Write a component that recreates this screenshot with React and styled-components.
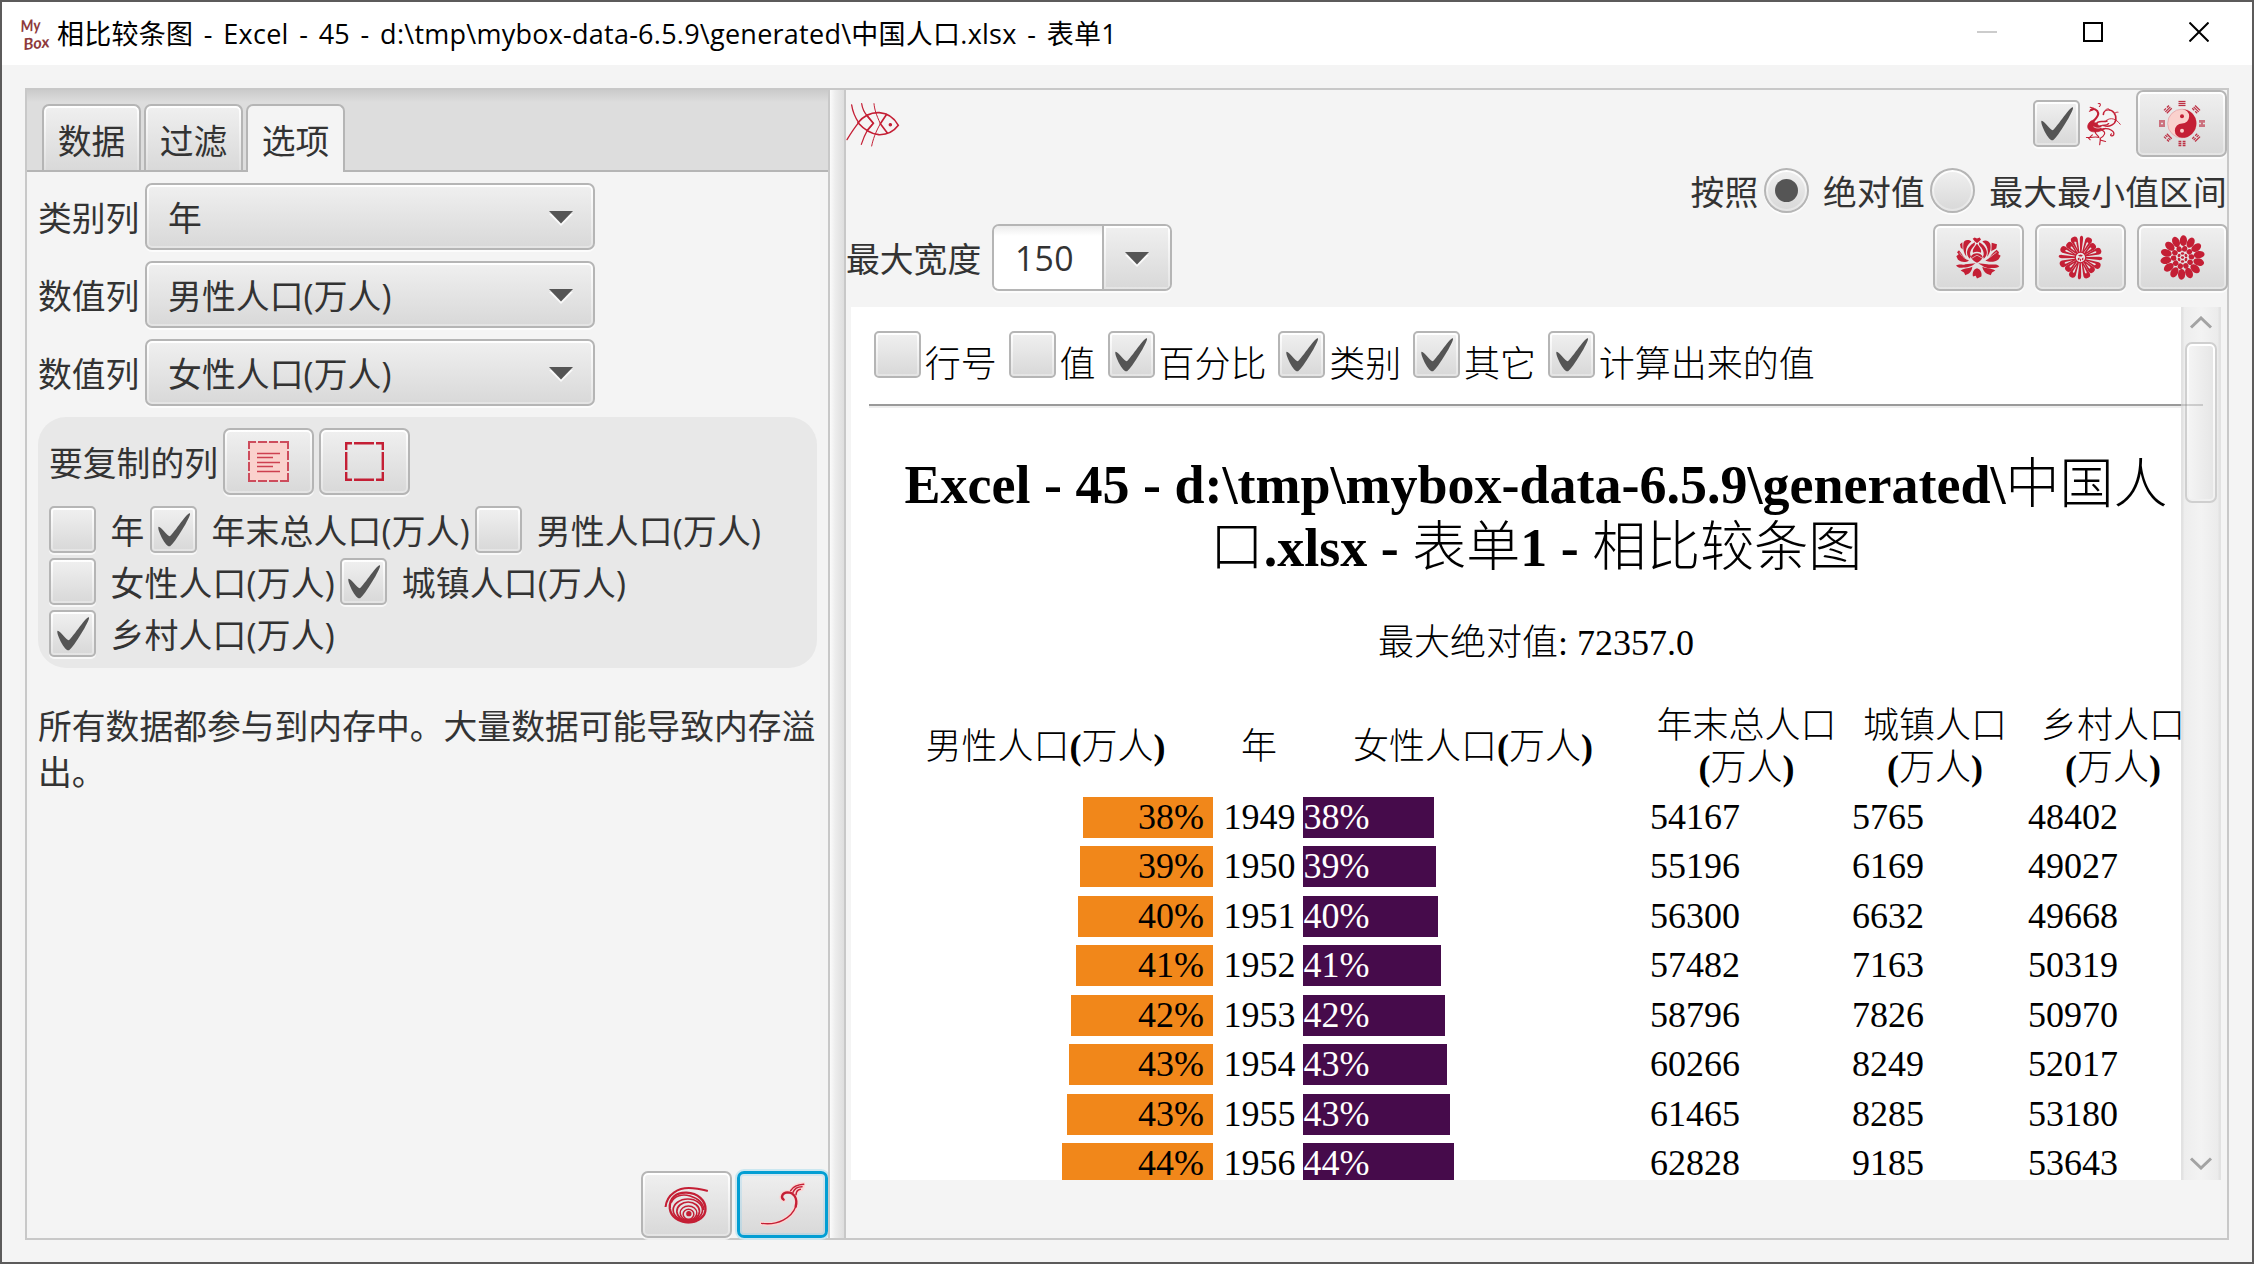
import React from "react";
import styled, { createGlobalStyle, css } from "styled-components";

const RED = "#c41f35";
const PINK = "#fad1cd";
const SANS = '"Open Sans", "Noto Sans CJK SC", sans-serif';
const SERIF = '"Liberation Serif", "Noto Sans CJK SC", serif';

const GlobalStyle = createGlobalStyle`
  *, *::before, *::after { box-sizing: border-box; }
  body { margin: 0; background: #5c5b5b; overflow: hidden; }
  svg { display: block; flex: none; }
`;

const Window = styled.div`
  width: 2254px;
  height: 1264px;
  border: 2px solid #5c5b5b;
  background: #f4f4f4;
  display: flex;
  flex-direction: column;
  font-family: ${SANS};
  font-size: 33.8px;
  line-height: 46px;
  color: #333;
  white-space: nowrap;
`;

const TitleBar = styled.header`
  height: 63px;
  flex: none;
  background: #fff;
  display: flex;
  align-items: center;
  padding: 0 43px 0 16px;
`;

const Title = styled.h1`
  margin: 0 auto 0 4px;
  font-size: 27px;
  line-height: 40px;
  font-weight: 400;
  letter-spacing: 0.25px;
  word-spacing: 3.3px;
  color: #000;
`;

const WindowButtons = styled.div`
  display: flex;
  gap: 86px;
  padding-bottom: 3px;
`;

const Split = styled.main`
  flex: 1;
  margin: 23px 23px 22px;
  border: 2px solid #c8c8c8;
  display: flex;
  min-height: 0;
`;

const LeftPane = styled.section`
  width: 801px;
  flex: none;
  display: flex;
  flex-direction: column;
`;

const Splitter = styled.div`
  width: 18px;
  flex: none;
  border: solid #c8c8c8;
  border-width: 0 2px;
  background: linear-gradient(90deg, #fbfbfb, #ececec 40%, #dedede);
`;

const RightPane = styled.section`
  flex: 1;
  min-width: 0;
  display: flex;
  flex-direction: column;
`;

const TabHeader = styled.nav`
  height: 82px;
  flex: none;
  display: flex;
  align-items: flex-end;
  gap: 3px;
  padding: 0 14px 0 15px;
  border-bottom: 2px solid #b5b5b5;
  background: linear-gradient(#cbcbcb, #dddddd 12px);
`;

const Tab = styled.div`
  width: 99px;
  height: 66px;
  border: 2px solid #b5b5b5;
  border-bottom: 0;
  border-radius: 7px 7px 0 0;
  padding: 2px 2px 0;
  display: flex;
  align-items: center;
  justify-content: center;
  background: linear-gradient(#efefef, #d9d9d9) content-box,
    linear-gradient(#fff, #e0e0e0) padding-box;
  ${(p) =>
    p.$active &&
    css`
      height: 68px;
      margin-bottom: -2px;
      padding-bottom: 2px;
      background: #f4f4f4;
    `}
`;

const TabText = styled.span`
  height: 100%;
  display: flex;
  align-items: center;
  padding-top: 3px;
`;

const face = css`
  border: 2px solid #b5b5b5;
  padding: 2px;
  background: linear-gradient(#efefef, #d9d9d9) content-box,
    linear-gradient(#fff, #e4e4e4) padding-box;
  box-shadow: 0 2px 0 rgba(255, 255, 255, 0.7);
`;

const Form = styled.div`
  flex: 1;
  display: flex;
  flex-direction: column;
  padding: 11px 11px 0;
`;

const Field = styled.div`
  display: flex;
  align-items: center;
  gap: 5px;
  margin-bottom: 11px;
`;

const FieldLabel = styled.span`
  width: ${(p) => p.$width || "102px"};
  flex: none;
  padding-top: 2px;
`;

const Combo = styled.div`
  ${face}
  width: 450px;
  height: 67px;
  border-radius: 7px;
  display: flex;
  align-items: center;
  justify-content: space-between;
`;

const ComboText = styled.span`
  padding: 2px 0 0 19px;
  letter-spacing: 0.1px;
`;

const ComboArrow = styled.span`
  margin-right: 18px;
  padding-top: 3px;
`;

const Group = styled.div`
  width: 779px;
  height: 251px;
  border-radius: 28px;
  background: #e8e8e8;
  padding: 11px;
`;

const GroupHead = styled.div`
  display: flex;
  align-items: center;
  gap: 5px;
  margin-bottom: 11px;
`;

const IconButton = styled.button`
  ${face}
  width: 91px;
  height: 67px;
  flex: none;
  border-radius: 7px;
  display: flex;
  align-items: center;
  justify-content: center;
  ${(p) =>
    p.$focused &&
    css`
      border-width: 3px;
      border-color: #039ed3;
      background: linear-gradient(#eeeeee, #d9d9d9) content-box,
        linear-gradient(#d4e6ef, #bdd5df) padding-box;
      box-shadow: 0 0 0 2px #cbe7f0;
    `}
`;

const CheckRow = styled.div`
  display: flex;
  gap: 5.5px;
  height: 52px;
`;

const CheckItem = styled.label`
  display: flex;
  gap: 14.5px;
  height: 47px;
  line-height: 50px;
  letter-spacing: 0.2px;
`;

const Box = styled.span`
  ${face}
  width: 47px;
  height: 47px;
  flex: none;
  border-radius: 5px;
  display: flex;
  align-items: center;
  justify-content: center;
`;

const Note = styled.p`
  margin: 36px 0 0;
  width: 781px;
  line-height: 45.5px;
  white-space: normal;
`;

const Actions = styled.div`
  display: flex;
  justify-content: flex-end;
  gap: 5px;
`;

const TopRow = styled.div`
  height: 67px;
  flex: none;
  display: flex;
  align-items: center;
`;

const FishSlot = styled.span`
  padding-top: 2px;
`;

const TopTools = styled.div`
  margin-left: auto;
  display: flex;
  align-items: center;
`;

const BirdSlot = styled.span`
  margin: 0 15px 0 5px;
`;

const ModeRow = styled.div`
  height: 45px;
  flex: none;
  margin: 11px 0;
  display: flex;
  align-items: center;
  justify-content: flex-end;
`;

const ModeText = styled.span`
  padding-top: 2px;
  letter-spacing: 0.15px;
  margin-left: ${(p) => p.$left || "0"};
`;

const Radio = styled.span`
  ${face}
  width: 45px;
  height: 45px;
  margin-left: 5px;
  border-radius: 50%;
  display: flex;
  align-items: center;
  justify-content: center;
`;

const RadioDot = styled.span`
  width: 23px;
  height: 23px;
  border-radius: 50%;
  background: #555;
`;

const WidthRow = styled.div`
  height: 67px;
  flex: none;
  display: flex;
  align-items: center;
`;

const EditableCombo = styled.div`
  width: 180px;
  height: 67px;
  margin-left: 11px;
  border: 2px solid #b5b5b5;
  border-radius: 7px;
  box-shadow: 0 2px 0 rgba(255, 255, 255, 0.7);
  display: flex;
  overflow: hidden;
`;

const ComboInput = styled.span`
  flex: 1;
  padding: 9px 0 0 21px;
  letter-spacing: 0.3px;
  background: linear-gradient(#ececec, #fff 10px);
`;

const ComboToggle = styled.span`
  width: 68px;
  border-left: 2px solid #b5b5b5;
  padding: 2px;
  display: flex;
  align-items: center;
  justify-content: center;
  background: linear-gradient(#efefef, #d9d9d9) content-box,
    linear-gradient(#fff, #e4e4e4) padding-box;
`;

const ToggleArrow = styled.span`
  padding-top: 3px;
`;

const FlowerButtons = styled.div`
  margin: 0 -1px 0 auto;
  display: flex;
  gap: 11px;
`;

const WebView = styled.div`
  position: relative;
  width: 1370px;
  height: 873px;
  margin: 16px 0 0 5px;
  background: #fff;
  color: #000;
  overflow: hidden;
  font-family: ${SERIF};
  font-size: 36px;
`;

const Page = styled.article`
  padding: 24px 18px 0;
`;

const Switches = styled.div`
  display: flex;
  gap: 12px;
  padding-left: 5px;
  height: 73px;
`;

const Switch = styled.label`
  display: flex;
  gap: 3.8px;
  line-height: 69px;
  font-weight: 300;
`;

const Rule = styled.hr`
  margin: 0;
  height: 4px;
  border: 0;
  border-top: 2px solid #9a9a9a;
  background: #eeeeee;
`;

const Heading = styled.h2`
  margin: 46px 0 0;
  font-size: 54px;
  line-height: 62.5px;
  font-weight: 700;
  text-align: center;
`;

const Han = styled.span`
  font-weight: 300;
`;

const Summary = styled.p`
  margin: 43px 0 0;
  line-height: 42px;
  text-align: center;
  font-weight: 400;
`;

const Table = styled.div`
  margin: 41px 0 0 9px;
`;

const Row = styled.div`
  display: grid;
  grid-template-columns: 345px 80px 347px 202px 176px 170px;
  height: 49.5px;
  line-height: 41px;
`;

const HeadRow = styled(Row)`
  height: 84px;
  line-height: 42px;
  font-weight: 700;
  align-items: center;
  text-align: center;
  margin-bottom: 7.5px;
`;

const HeadCell = styled.div`
  padding-right: ${(p) => p.$pad}px;
`;

const LeftBar = styled.div`
  width: ${(p) => p.$size}px;
  height: 41px;
  margin-left: ${(p) => 335 - p.$size}px;
  padding-right: 9px;
  background: #f1871a;
  text-align: right;
`;

const RightBar = styled.div`
  width: ${(p) => p.$size}px;
  height: 41px;
  padding-left: 0.5px;
  background: #460b4b;
  color: #fff;
`;

const YearCell = styled.div`
  padding-left: 0.5px;
`;

const ScrollBar = styled.div`
  position: absolute;
  top: 0;
  right: 0;
  width: 40px;
  height: 100%;
  padding: 9px 4px 10px;
  display: flex;
  flex-direction: column;
  align-items: center;
  background: linear-gradient(90deg, #e2e2e2 0 2px, #ededed 3px, #f3f3f3 50%, #ebebeb 37px, #e2e2e2 38px);
`;

const Thumb = styled.div`
  width: 32px;
  height: 161px;
  margin: 13px 0 auto;
  padding: 2px;
  border: 2px solid #cfcfcf;
  border-radius: 7px;
  background: linear-gradient(90deg, #f4f4f4, #e6e6e6) content-box,
    linear-gradient(#fff, #f0f0f0) padding-box;
`;

const RuleShade = styled.div`
  position: absolute;
  top: 97px;
  right: 18px;
  width: 22px;
  height: 2px;
  background: rgba(120, 120, 120, 0.3);
`;

function Tick() {
  return (
    <svg width="32" height="34" viewBox="-0.5 -1.1 16.5 17.6" preserveAspectRatio="none">
      <path
        d="M-0.25 6.083c0.843-0.758 4.583 4.833 5.75 4.833S14.5-1.5 15.917-0.917c1.292 0.532-8.75 17.083-10.5 17.083C3 16.167-1.094 6.833-0.25 6.083z"
        fill="#555"
      />
    </svg>
  );
}

function CheckBox({ on }) {
  return <Box>{on && <Tick />}</Box>;
}

function Arrow() {
  return (
    <svg width="24" height="15" viewBox="0 0 24 15">
      <path d="M0 3H24L12 15Z" fill="#fafafa" />
      <path d="M0 0H24L12 12.5Z" fill="#555" />
    </svg>
  );
}

function Chevron({ down }) {
  return (
    <svg width="24" height="13" viewBox="0 0 24 13">
      <path
        d={down ? "M2 1.5L12 11L22 1.5" : "M2 11.5L12 2L22 11.5"}
        fill="none"
        stroke="#a3a3a3"
        strokeWidth="3"
      />
    </svg>
  );
}

function Logo() {
  return (
    <svg width="35" height="34" viewBox="0 0 35 34" fill="#8e3a3c" fontFamily="Lato, sans-serif" fontStyle="italic" fontWeight="700">
      <text x="3" y="15" fontSize="16" textLength="20" lengthAdjust="spacingAndGlyphs" transform="rotate(-5 3 15)">My</text>
      <text x="6" y="33" fontSize="16" textLength="26" lengthAdjust="spacingAndGlyphs" transform="rotate(-6 6 33)">Box</text>
    </svg>
  );
}

function SelectAllIcon() {
  return (
    <svg width="41" height="41" viewBox="0 0 41 41">
      <rect x="0.5" y="0.5" width="40" height="40" fill={PINK} />
      <path d="M0 1H8M10 1H19M21 1H30M32 1H41M0 40H8M10 40H19M21 40H30M32 40H41M1 0V8M1 10V19M1 21V30M1 32V41M40 0V8M40 10V19M40 21V30M40 32V41" stroke="#cd4c5c" strokeWidth="2" />
      <path d="M9 12.5H32M9 21.5H32M9 30.5H32M9 16.5H25M9 25.5H25" stroke="#cd4050" strokeWidth="1.6" />
    </svg>
  );
}

function SelectNoneIcon() {
  return (
    <svg width="39" height="39" viewBox="0 0 39 39">
      <path d="M0 1.2H7M9 1.2H29M31 1.2H39M0 37.8H7M9 37.8H29M31 37.8H39M1.2 0V8M1.2 10V28M1.2 30V39M37.8 0V8M37.8 10V28M37.8 30V39" stroke={RED} strokeWidth="2.4" />
    </svg>
  );
}

function ShellIcon() {
  return (
    <svg width="45" height="38" viewBox="136 140 134 114" fill="none" stroke={RED}>
      <path d="M140 203C144 166 178 142 222 147C240 149 254 151 267 155" strokeWidth="6" />
      <path d="M140 203C143 185 150 172 160 164" strokeWidth="3" />
      <path d="M153 208C150 176 172 159 203 160C238 161 260 184 260 209C260 232 240 247 208 248C178 248 156 232 153 208Z" strokeWidth="7" />
      <path d="M157 190C166 168 192 163 214 170C240 178 254 194 255 212" strokeWidth="5" />
      <ellipse cx="207" cy="212" rx="44" ry="33" strokeWidth="5" />
      <ellipse cx="208" cy="216" rx="34" ry="28" strokeWidth="5" />
      <ellipse cx="209" cy="221" rx="25" ry="21" strokeWidth="4.5" />
      <ellipse cx="209" cy="225" rx="16" ry="15" strokeWidth="4.5" />
      <circle cx="210" cy="223" r="5" fill={RED} strokeWidth="6" />
      <path d="M178 236C190 247 230 247 242 236L232 247C218 251 198 251 188 246Z" fill={RED} strokeWidth="4" />
    </svg>
  );
}

function SproutIcon() {
  const glow =
    "M420 248C470 258 512 232 525 196C531 172 518 153 499 154C482 155 475 172 488 179M509 152C520 134 532 130 550 131M516 156C520 144 532 138 545 138M523 162C526 150 532 145 542 145";
  return (
    <svg width="45" height="45" viewBox="417 124 135 135" fill="none" strokeLinecap="round">
      <path d={glow} stroke="#fbd5d3" strokeWidth="12" />
      <path d="M422 248C470 255 512 232 525 196" stroke={RED} strokeWidth="4" />
      <path d="M524 198C531 172 518 155 499 155C484 156 478 170 488 177" stroke={RED} strokeWidth="7" />
      <path d="M509 150C518 135 530 132 548 131M516 155C520 144 532 138 543 138M525 162C526 152 532 147 538 146" stroke={RED} strokeWidth="4.5" />
    </svg>
  );
}

function FishIcon() {
  return (
    <svg width="54" height="44" viewBox="50 71 162 132" fill="none" stroke={RED} strokeWidth="3.6" strokeLinecap="round">
      <path d="M86 130C108 104 132 99 150 100C178 102 196 118 207 138C192 158 172 167 148 166C122 163 104 150 86 130Z" strokeWidth="4.8" />
      <path d="M67 77C70 98 76 112 88 130C74 147 64 163 53 181" strokeWidth="4" />
      <path d="M97 73C99 88 105 100 114 110L132 132L114 153C107 165 101 180 96 195" />
      <path d="M134 73C136 92 140 104 153 133C138 160 131 180 127 200" strokeWidth="3" />
      <path d="M114 110L132 132L114 153M172 105L153 133L174 161" strokeWidth="5" />
      <circle cx="183" cy="136" r="3.5" fill={RED} />
    </svg>
  );
}

function BirdIcon() {
  return (
    <svg width="36" height="44" viewBox="1108 304 98 134" preserveAspectRatio="none" fill="none" stroke={RED} strokeWidth="4" strokeLinecap="round" strokeLinejoin="round">
      <path d="M1124 328C1130 322 1142 326 1144 338C1145 350 1134 358 1126 368" strokeWidth="6" />
      <path d="M1144 309C1150 306 1152 314 1147 318M1132 323L1122 320M1130 328L1120 332" strokeWidth="3" />
      <path d="M1124 362C1112 372 1112 388 1126 394C1140 398 1154 392 1164 384C1154 388 1148 384 1152 376C1146 378 1140 374 1142 366C1136 370 1132 366 1132 360Z" fill={RED} strokeWidth="2" />
      <path d="M1142 366C1152 360 1158 366 1168 362M1150 378C1160 372 1166 378 1172 370" strokeWidth="4.5" />
      <path d="M1132 380C1142 386 1150 384 1156 378" stroke="#f4f4f4" strokeWidth="2" />
      <path d="M1160 376C1174 382 1190 372 1192 358C1194 342 1184 328 1172 328C1164 328 1158 334 1158 342" strokeWidth="4.5" />
      <path d="M1166 360C1178 350 1192 354 1204 372M1188 340C1190 336 1194 334 1198 335M1176 330C1174 322 1168 324 1164 328" strokeWidth="2.6" />
      <path d="M1158 386C1172 382 1190 392 1186 404C1182 410 1174 406 1180 401" strokeWidth="3.6" />
      <path d="M1136 394C1134 402 1144 404 1146 412C1134 408 1128 414 1112 412M1116 412L1122 419M1122 410L1128 404" strokeWidth="3.2" />
      <path d="M1154 390C1168 396 1160 408 1150 414C1146 420 1154 422 1164 424M1150 416L1148 434" strokeWidth="3.2" />
    </svg>
  );
}

function BaguaIcon() {
  const trigrams = [
    [1, 1, 1],
    [0, 1, 1],
    [0, 1, 0],
    [0, 0, 1],
    [0, 0, 0],
    [1, 0, 0],
    [1, 0, 1],
    [1, 1, 0],
  ];
  return (
    <svg width="46" height="47" viewBox="-69 -70 138 140">
      <circle r="43" fill={PINK} stroke="#e09aa0" strokeWidth="2" />
      <path d="M0 -43A43 43 0 0 1 0 43A21.5 21.5 0 0 1 0 0A21.5 21.5 0 0 0 0 -43Z" fill={RED} />
      <circle cy="-21.5" r="6" fill={RED} />
      <circle cy="21.5" r="6" fill={PINK} />
      {trigrams.map((lines, i) => (
        <g key={i} transform={`rotate(${i * 45})`}>
          {lines.map((solid, k) => (
            <path
              key={k}
              d={solid ? `M-10.5 ${-54 - k * 6}H10.5` : `M-10.5 ${-54 - k * 6}H-2M2 ${-54 - k * 6}H10.5`}
              stroke="#bd3044"
              strokeWidth="3.8"
            />
          ))}
        </g>
      ))}
    </svg>
  );
}

function PeonyIcon() {
  return (
    <svg width="45" height="42" viewBox="168 83 135 125" fill={RED}>
      <path d="M231 131C220 131 213 137 213 144C218 153 226 157 231 160C237 157 245 152 248 144C247 137 241 131 231 131Z" />
      <path d="M210 148C194 134 200 112 224 98C226 104 224 108 218 114C210 124 208 134 213 141C211 143 210 145 210 148Z" />
      <path d="M251 148C268 134 262 112 238 98C235 104 238 108 244 114C251 124 253 134 249 141C250 143 251 145 251 148Z" />
      <path d="M219 130C216 120 224 114 229 104L233 104C238 114 246 120 243 130C236 126 226 126 219 130Z" />
      <path d="M218 88L224 84L231 87L239 84L243 90L238 95L231 101L224 95Z" />
      <path d="M247 96C256 89 268 95 271 104C273 116 272 130 261 142C267 124 262 106 247 96Z" />
      <path d="M214 96C204 88 190 92 190 104C189 116 190 130 200 142C194 124 199 108 214 96Z" />
      <path d="M275 100L291 104L289 116C283 121 278 121 274 126ZM187 98L180 104L182 114L188 120Z" />
      <path d="M256 153C268 149 274 132 290 121L297 128L295 134L302 139L296 149C284 159 268 159 256 153Z" />
      <path d="M207 153C194 149 188 136 177 122L171 128L176 134L169 140L174 151C186 160 198 159 207 153Z" />
      <path d="M260 149C274 142 280 134 290 128M202 150C190 145 186 137 178 130" stroke="#e4e4e4" strokeWidth="2.2" fill="none" />
      <path d="M168 168C180 162 188 168 196 164L227 161C216 168 208 174 190 174C182 176 174 176 168 168Z" />
      <path d="M235 161L262 164C274 168 288 160 298 170C290 178 280 174 270 176C256 176 246 168 235 161Z" />
      <path d="M182 183C196 175 208 177 217 172C216 185 208 194 196 197L192 189Z" />
      <path d="M286 183C270 175 256 178 247 172C249 185 258 194 272 197L276 189Z" />
      <path d="M231 176C221 178 216 190 219 201L227 199L231 207L236 205L244 201C247 190 241 178 231 176Z" />
      <path d="M216 146L231 137L247 146" stroke="#e8e8e8" strokeWidth="2" fill="none" />
    </svg>
  );
}

function DaisyIcon() {
  const petals = 16;
  return (
    <svg width="45" height="45" viewBox="-68 -68 136 136">
      {Array.from({ length: petals }, (_, i) => {
        const thin = i % 4 === 0;
        const reach = i % 4 === 2 ? 59 : 66;
        const half = thin ? 5 : 10.5;
        return (
          <g key={i} transform={`rotate(${(i * 360) / petals + 3})`}>
            <path
              d={`M-2 -14L${-half} ${-reach + 10}Q${-half} ${-reach} 0 ${-reach}Q${half} ${-reach} ${half} ${-reach + 10}L2 -14Z`}
              fill={RED}
            />
            {!thin && <path d={`M0 -24L-2.8 ${-reach + 18}Q0 ${-reach + 12} 2.8 ${-reach + 18}Z`} fill="#e6e6e6" />}
          </g>
        );
      })}
      <circle r="16" fill="#e6e6e6" stroke={RED} strokeWidth="4" />
      <path d="M-8 -6L0 -9L7 -7L4 -3H-2ZM-8 2L-3 0V6L-8 9ZM5 2L9 0L8 9L4 6ZM-2 6L0 3L2 6L1 11H-1Z" fill={RED} />
    </svg>
  );
}

function DahliaIcon() {
  const ring = (count, radius, rx, ry, shift) =>
    Array.from({ length: count }, (_, i) => (
      <ellipse
        key={`${radius}-${i}`}
        cx="0"
        cy={-radius}
        rx={rx}
        ry={ry}
        transform={`rotate(${(i * 360) / count + shift})`}
      />
    ));
  return (
    <svg width="45" height="45" viewBox="-68 -68 136 136" fill={RED}>
      {ring(14, 51, 11, 16.5, 3)}
      {ring(10, 27, 8, 8.5, 14)}
      {ring(6, 12, 5, 4, 0)}
      <path d="M-5 0C-4 -6 4 -5 5 0C4 5 -3 5 -5 0Z" />
    </svg>
  );
}

const CHOICES = [
  [["年", false], ["年末总人口(万人)", true], ["男性人口(万人)", false]],
  [["女性人口(万人)", false], ["城镇人口(万人)", true]],
  [["乡村人口(万人)", true]],
];

const SWITCHES = [
  ["行号", false],
  ["值", false],
  ["百分比", true],
  ["类别", true],
  ["其它", true],
  ["计算出来的值", true],
];

const ROWS = [
  { year: 1949, pct: 38, bar: 130.5, total: 54167, urban: 5765, rural: 48402 },
  { year: 1950, pct: 39, bar: 133, total: 55196, urban: 6169, rural: 49027 },
  { year: 1951, pct: 40, bar: 135, total: 56300, urban: 6632, rural: 49668 },
  { year: 1952, pct: 41, bar: 137.5, total: 57482, urban: 7163, rural: 50319 },
  { year: 1953, pct: 42, bar: 142, total: 58796, urban: 7826, rural: 50970 },
  { year: 1954, pct: 43, bar: 144, total: 60266, urban: 8249, rural: 52017 },
  { year: 1955, pct: 43, bar: 146.5, total: 61465, urban: 8285, rural: 53180 },
  { year: 1956, pct: 44, bar: 151, total: 62828, urban: 9185, rural: 53643 },
];

function ComboField({ label, value }) {
  return (
    <Field>
      <FieldLabel>{label}</FieldLabel>
      <Combo>
        <ComboText>{value}</ComboText>
        <ComboArrow>
          <Arrow />
        </ComboArrow>
      </Combo>
    </Field>
  );
}

function OptionsPane() {
  return (
    <LeftPane>
      <TabHeader>
        <Tab><TabText>数据</TabText></Tab>
        <Tab><TabText>过滤</TabText></Tab>
        <Tab $active><TabText>选项</TabText></Tab>
      </TabHeader>
      <Form>
        <ComboField label="类别列" value="年" />
        <ComboField label="数值列" value="男性人口(万人)" />
        <ComboField label="数值列" value="女性人口(万人)" />
        <Group>
          <GroupHead>
            <FieldLabel $width="169px">要复制的列</FieldLabel>
            <IconButton><SelectAllIcon /></IconButton>
            <IconButton><SelectNoneIcon /></IconButton>
          </GroupHead>
          {CHOICES.map((row, i) => (
            <CheckRow key={i}>
              {row.map(([text, on]) => (
                <CheckItem key={text}>
                  <CheckBox on={on} />
                  {text}
                </CheckItem>
              ))}
            </CheckRow>
          ))}
        </Group>
        <Note>所有数据都参与到内存中。大量数据可能导致内存溢出。</Note>
      </Form>
      <Actions>
        <IconButton><ShellIcon /></IconButton>
        <IconButton $focused><SproutIcon /></IconButton>
      </Actions>
    </LeftPane>
  );
}

function Report() {
  return (
    <WebView>
      <Page>
        <Switches>
          {SWITCHES.map(([text, on]) => (
            <Switch key={text}>
              <CheckBox on={on} />
              {text}
            </Switch>
          ))}
        </Switches>
        <Rule />
        <Heading>
          Excel - 45 - d:\tmp\mybox-data-6.5.9\generated\<Han>中国人</Han>
          <br />
          <Han>口</Han>.xlsx - <Han>表单</Han>1 - <Han>相比较条图</Han>
        </Heading>
        <Summary>
          <Han>最大绝对值</Han>: 72357.0
        </Summary>
        <Table>
          <HeadRow>
            <HeadCell $pad={10}><Han>男性人口</Han>(<Han>万人</Han>)</HeadCell>
            <HeadCell $pad={8}><Han>年</Han></HeadCell>
            <HeadCell $pad={7}><Han>女性人口</Han>(<Han>万人</Han>)</HeadCell>
            <HeadCell $pad={9}><Han>年末总人口</Han><br />(<Han>万人</Han>)</HeadCell>
            <HeadCell $pad={10}><Han>城镇人口</Han><br />(<Han>万人</Han>)</HeadCell>
            <HeadCell $pad={0}><Han>乡村人口</Han><br />(<Han>万人</Han>)</HeadCell>
          </HeadRow>
          {ROWS.map((r) => (
            <Row key={r.year}>
              <div><LeftBar $size={r.bar}>{r.pct}%</LeftBar></div>
              <YearCell>{r.year}</YearCell>
              <div><RightBar $size={r.bar}>{r.pct}%</RightBar></div>
              <div>{r.total}</div>
              <div>{r.urban}</div>
              <div>{r.rural}</div>
            </Row>
          ))}
        </Table>
      </Page>
      <ScrollBar>
        <Chevron />
        <Thumb />
        <Chevron down />
      </ScrollBar>
      <RuleShade />
    </WebView>
  );
}

function ChartPane() {
  return (
    <RightPane>
      <TopRow>
        <FishSlot><FishIcon /></FishSlot>
        <TopTools>
          <CheckBox on />
          <BirdSlot><BirdIcon /></BirdSlot>
          <IconButton><BaguaIcon /></IconButton>
        </TopTools>
      </TopRow>
      <ModeRow>
        <ModeText>按照</ModeText>
        <Radio><RadioDot /></Radio>
        <ModeText $left="14.5px">绝对值</ModeText>
        <Radio />
        <ModeText $left="14.5px">最大最小值区间</ModeText>
      </ModeRow>
      <WidthRow>
        <FieldLabel $width="135px">最大宽度</FieldLabel>
        <EditableCombo>
          <ComboInput>150</ComboInput>
          <ComboToggle>
            <ToggleArrow><Arrow /></ToggleArrow>
          </ComboToggle>
        </EditableCombo>
        <FlowerButtons>
          <IconButton><PeonyIcon /></IconButton>
          <IconButton><DaisyIcon /></IconButton>
          <IconButton><DahliaIcon /></IconButton>
        </FlowerButtons>
      </WidthRow>
      <Report />
    </RightPane>
  );
}

export default function App() {
  return (
    <>
      <GlobalStyle />
      <Window>
        <TitleBar>
          <Logo />
          <Title>相比较条图 - Excel - 45 - d:\tmp\mybox-data-6.5.9\generated\中国人口.xlsx - 表单1</Title>
          <WindowButtons>
            <svg width="20" height="20" viewBox="0 0 20 20"><path d="M0 10H20" stroke="#ccc" strokeWidth="2" /></svg>
            <svg width="20" height="20" viewBox="0 0 20 20"><rect x="1" y="1" width="18" height="18" fill="none" stroke="#000" strokeWidth="2" /></svg>
            <svg width="20" height="20" viewBox="0 0 20 20"><path d="M0.5 0.5L19.5 19.5M19.5 0.5L0.5 19.5" stroke="#000" strokeWidth="2" /></svg>
          </WindowButtons>
        </TitleBar>
        <Split>
          <OptionsPane />
          <Splitter />
          <ChartPane />
        </Split>
      </Window>
    </>
  );
}
